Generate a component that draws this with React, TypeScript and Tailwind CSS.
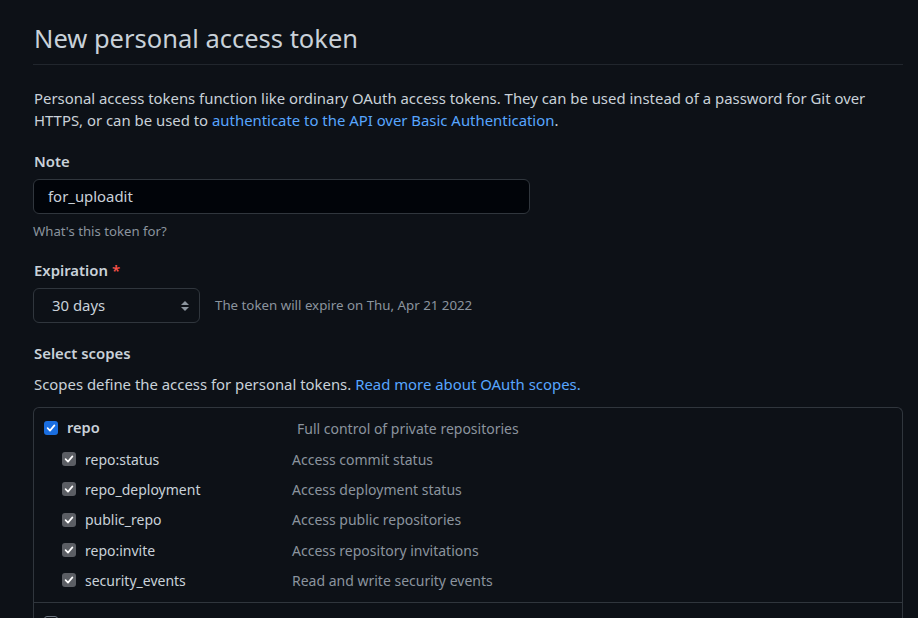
import React from "react";

const font = { fontFamily: '"Noto Sans", "Open Sans", Arial, sans-serif' };

function Check({ blue, checked = true }: { blue?: boolean; checked?: boolean }) {
  return (
    <div
      className={
        "flex h-[14px] w-[14px] shrink-0 items-center justify-center rounded-[3px] " +
        (blue ? "bg-[#1a6ee0]" : checked ? "bg-[#5b5e64]" : "border border-[#6e7681] bg-[#0d1117]")
      }
    >
      {checked && (
        <svg width="10" height="10" viewBox="0 0 10 10" fill="none">
          <path d="M1.6 5.2 L4 7.6 L8.4 2.4" stroke="#ffffff" strokeWidth="1.7" strokeLinecap="round" strokeLinejoin="round" />
        </svg>
      )}
    </div>
  );
}

const subs: [string, string][] = [
  ["repo:status", "Access commit status"],
  ["repo_deployment", "Access deployment status"],
  ["public_repo", "Access public repositories"],
  ["repo:invite", "Access repository invitations"],
  ["security_events", "Read and write security events"],
];

export default function App() {
  return (
    <div className="min-h-screen w-full overflow-hidden bg-[#0d1117] text-[#c9d1d9]" style={font}>
      <div className="w-[903px] pl-[33px] pt-[20px]">
        <div className="border-b border-[#21262d] pb-[8px]">
          <h2 className="pl-[1px] text-[25.5px] font-normal leading-[36px]">New personal access token</h2>
        </div>
        <p className="mt-[22px] pl-[1px] text-[14.9px] leading-[22px]">
          Personal access tokens function like ordinary OAuth access tokens. They can be used instead of a password for Git over
          <br />
          HTTPS, or can be used to <span className="text-[#58a6ff]">authenticate to the API over Basic Authentication</span>.
        </p>

        <div className="mt-[19px] pl-[1px] text-[14.9px] font-semibold leading-[22px]">Note</div>
        <div className="mt-[7px] flex h-[35px] w-[497px] items-center rounded-[6px] border border-[#30363d] bg-[#010409] pl-[14px] text-[14.9px]">
          for_uploadit
        </div>
        <div className="mt-[8px] text-[13.2px] leading-[18px] text-[#8b949e]">What's this token for?</div>

        <div className="mt-[19px] pl-[1px] text-[14.9px] font-semibold leading-[22px]">
          Expiration <span className="text-[#f85149]">*</span>
        </div>
        <div className="mt-[7px] flex items-center">
          <div className="flex h-[35px] w-[167px] items-center justify-between rounded-[6px] border border-[#30363d] bg-[#0d1117] pl-[18px] pr-[9px] text-[14.9px]">
            <span>30 days</span>
            <svg width="10" height="14" viewBox="0 0 10 14">
              <path d="M5 2 L9 6 H1 Z" fill="#8b949e" />
              <path d="M5 12 L9 8 H1 Z" fill="#8b949e" />
            </svg>
          </div>
          <span className="ml-[15px] text-[13.3px] text-[#8b949e]">The token will expire on Thu, Apr 21 2022</span>
        </div>

        <div className="mt-[19px] pl-[1px] text-[14.9px] font-semibold leading-[22px]">Select scopes</div>
        <p className="mt-[9px] pl-[1px] text-[14.9px] leading-[22px]">
          Scopes define the access for personal tokens. <span className="text-[#58a6ff]">Read more about OAuth scopes.</span>
        </p>

        <div className="mt-[12px] rounded-t-[6px] border border-b-0 border-[#30363d]">
          <div className="pb-[7px] pt-[9px]">
            <div className="flex h-[22px] items-center pl-[10px]">
              <Check blue />
              <span className="ml-[9px] w-[230px] text-[14.6px] font-semibold">repo</span>
              <span className="text-[14px] text-[#8b949e]">Full control of private repositories</span>
            </div>
            <div className="mt-[5px]">
              {subs.map(([n, d]) => (
                <div key={n} className="flex h-[30.3px] items-center pl-[28px]">
                  <Check />
                  <span className="ml-[9px] w-[207px] text-[14px]">{n}</span>
                  <span className="text-[14px] text-[#8b949e]">{d}</span>
                </div>
              ))}
            </div>
          </div>
          <div className="border-t border-[#30363d] pt-[13px]">
            <div className="flex h-[22px] items-start pl-[10px]">
              <Check checked={false} />
            </div>
          </div>
        </div>
      </div>
    </div>
  );
}
